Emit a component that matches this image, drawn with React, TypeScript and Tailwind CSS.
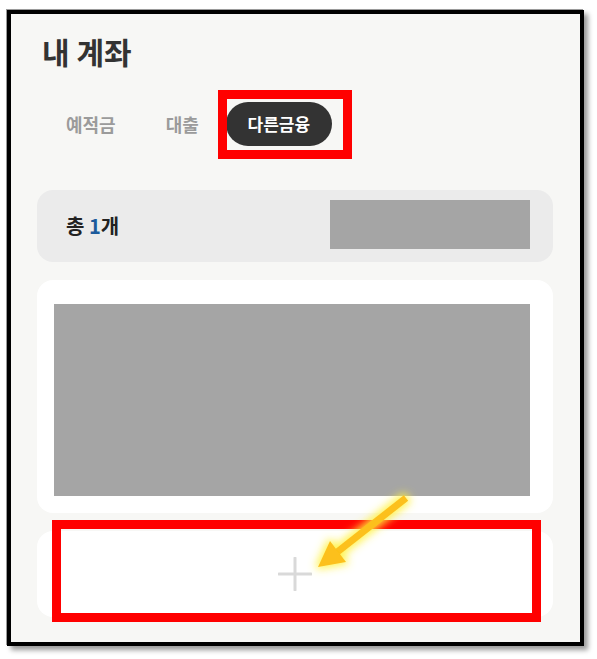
import React from "react";

const font = { fontFamily: '"Noto Sans CJK KR", "Noto Sans", sans-serif' };

export default function App() {
  return (
    <div className="relative w-[597px] h-[659px] bg-white overflow-hidden" style={font}>
      <div className="ml-[7px] mt-[10px] w-[577px] h-[636px] border-4 border-black bg-[#f7f7f5] shadow-[-1px_-1px_0_#9a9a9a,4px_4px_5px_rgba(0,0,0,0.4)]">
        <div className="flex flex-col pl-[26px] pr-[27px] pt-[19px]">
          <h1 className="pl-[5px] text-[30px] leading-[36px] font-bold text-[#333333]">내 계좌</h1>
          <div className="mt-[33px] pl-[29px] flex items-center h-[44px]">
            <div className="mr-[50px] text-[18px] font-semibold text-[#9b9b9b]">예적금</div>
            <div className="mr-[27px] text-[18px] font-semibold text-[#9b9b9b]">대출</div>
            <div className="h-[44px] w-[106px] flex items-center justify-center rounded-full bg-[#333333] text-[17px] font-semibold text-white">다른금융</div>
          </div>
          <div className="mt-[44px] h-[72px] rounded-[16px] bg-[#ebebeb] flex items-center justify-between pl-[29px] pr-[23px]">
            <div className="text-[20px] font-bold text-[#222222] leading-none">
              총 <span className="text-[#1c5b9c]">1</span><span className="font-semibold">개</span>
            </div>
            <div className="w-[200px] h-[49px] bg-[#a5a5a5] -mt-[3px]" />
          </div>
          <div className="mt-[18px] h-[233px] rounded-[16px] bg-white pl-[17px] pr-[23px] pt-[24px]">
            <div className="h-[192px] bg-[#a5a5a5]" />
          </div>
          <div className="mt-[18px] h-[86px] rounded-[16px] bg-white flex items-center justify-center">
            <svg width="34" height="34" viewBox="0 0 34 34">
              <line x1="17" y1="1" x2="17" y2="33" stroke="#d9d9d9" strokeWidth="3" strokeLinecap="round" />
              <line x1="1" y1="17" x2="33" y2="17" stroke="#d9d9d9" strokeWidth="3" strokeLinecap="round" />
            </svg>
          </div>
        </div>
      </div>

      <div className="absolute left-[218px] top-[90px] w-[134px] h-[69px] border-[9px] border-[#ff0000]" />
      <div className="absolute left-[52px] top-[520px] w-[489px] h-[102px] border-[9px] border-[#ff0000]" />

      <svg className="absolute left-0 top-0" width="597" height="659" viewBox="0 0 597 659">
        <defs>
          <filter id="glow" x="-50%" y="-50%" width="200%" height="200%">
            <feMorphology in="SourceAlpha" operator="dilate" radius="2" result="d" />
            <feGaussianBlur in="d" stdDeviation="4" result="b" />
            <feFlood floodColor="#fff23c" floodOpacity="0.9" />
            <feComposite in2="b" operator="in" result="g" />
            <feMerge>
              <feMergeNode in="g" />
              <feMergeNode in="SourceGraphic" />
            </feMerge>
          </filter>
        </defs>
        <g filter="url(#glow)">
          <line x1="406" y1="498" x2="336" y2="553" stroke="#fcc01a" strokeWidth="7" />
          <polygon points="318,567 330,541 346,562" fill="#fcc01a" />
        </g>
      </svg>
    </div>
  );
}
